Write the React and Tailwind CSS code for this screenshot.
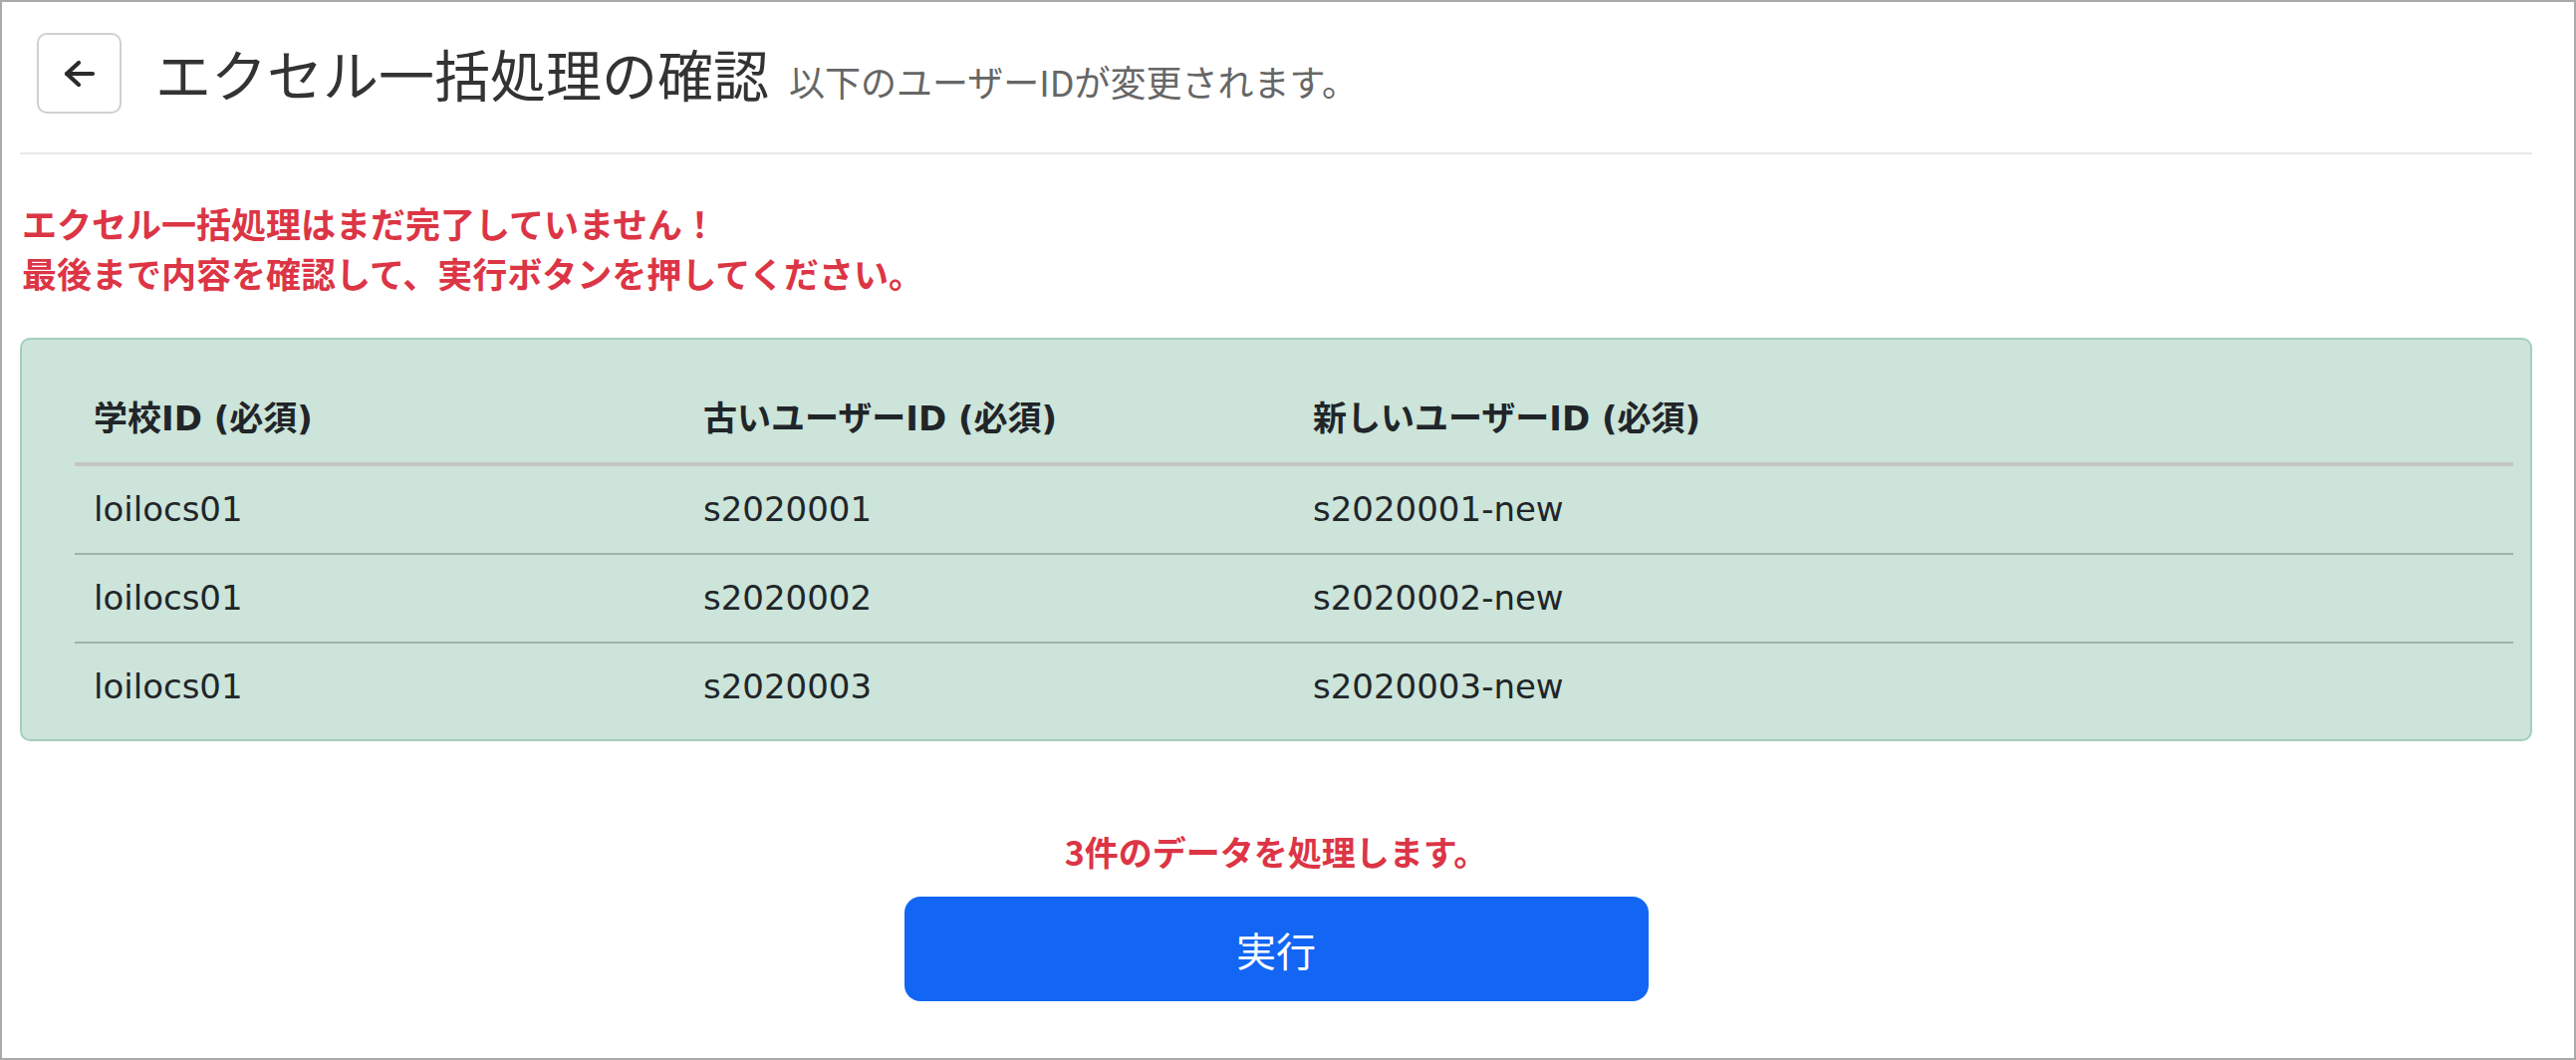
const rows = [
  ["loilocs01", "s2020001", "s2020001-new"],
  ["loilocs01", "s2020002", "s2020002-new"],
  ["loilocs01", "s2020003", "s2020003-new"],
];

const jp = { fontFamily: '"Noto Sans CJK JP", sans-serif' };

function BackButton() {
  return (
    <button className="flex h-[81px] w-[85px] shrink-0 items-center justify-center rounded-[10px] border-2 border-[#d0d0d0] bg-white">
      <svg width="32" height="28" viewBox="0 0 32 28" fill="none" stroke="#2b2b2b" strokeWidth="4.2" strokeLinecap="round" strokeLinejoin="round">
        <path d="M15 3 L3 14 L15 25" />
        <path d="M3 14 H29" />
      </svg>
    </button>
  );
}

export default function App() {
  return (
    <div
      className="h-[1064px] w-[2586px] border-2 border-[#aaaaaa] bg-white pl-[18px] pr-[42px] pt-[31px]"
      style={{ fontFamily: '"DejaVu Sans", "Noto Sans CJK JP", sans-serif' }}
    >
      {/* header */}
      <div className="ml-[17px] flex items-center">
        <BackButton />
        <div className="ml-[34px] flex items-baseline" style={jp}>
          <h1 className="text-[56px] font-normal leading-[1.2] text-[#333333]">エクセル一括処理の確認</h1>
          <span className="ml-[20px] text-[36px] text-[#666666]">以下のユーザーIDが変更されます。</span>
        </div>
      </div>

      <div className="mt-[39px] h-[2px] bg-[#e9e9e9]" />

      {/* warning */}
      <div className="mt-[44px] pl-[2px] text-[35px] font-bold leading-[50px] text-[#dc3545]" style={jp}>
        <p>エクセル一括処理はまだ完了していません！</p>
        <p>最後まで内容を確認して、実行ボタンを押してください。</p>
      </div>

      {/* table panel */}
      <div className="mt-[40px] rounded-[10px] border-2 border-[#a3cfbb] bg-[#cce4d9] pb-[9px] pl-[53px] pr-[17px] pt-[36px]">
        <table className="w-full table-fixed border-separate border-spacing-0 text-left text-[34px] text-[#212529]">
          <colgroup>
            <col className="w-1/4" />
            <col className="w-1/4" />
            <col className="w-1/2" />
          </colgroup>
          <thead>
            <tr>
              {["学校ID (必須)", "古いユーザーID (必須)", "新しいユーザーID (必須)"].map((h) => (
                <th key={h} className="border-b-4 border-[#c5c5c5] px-[19px] py-[18px] font-bold leading-[51px]">
                  {h}
                </th>
              ))}
            </tr>
          </thead>
          <tbody>
            {rows.map((r, i) => (
              <tr key={r[1]}>
                {r.map((c, j) => (
                  <td
                    key={j}
                    className={`px-[19px] py-[18px] leading-[51px] ${i < rows.length - 1 ? "border-b-2 border-[#a0b3aa]" : ""}`}
                  >
                    {c}
                  </td>
                ))}
              </tr>
            ))}
          </tbody>
        </table>
      </div>

      {/* footer */}
      <p className="mt-[85px] text-center text-[34px] font-bold leading-[51px] text-[#dc3545]" style={jp}>
        3件のデータを処理します。
      </p>
      <div className="mt-[20px] flex justify-center">
        <button className="h-[105px] w-[747px] rounded-[16px] bg-[#1366f4] text-[40px] text-white" style={jp}>
          実行
        </button>
      </div>
    </div>
  );
}
